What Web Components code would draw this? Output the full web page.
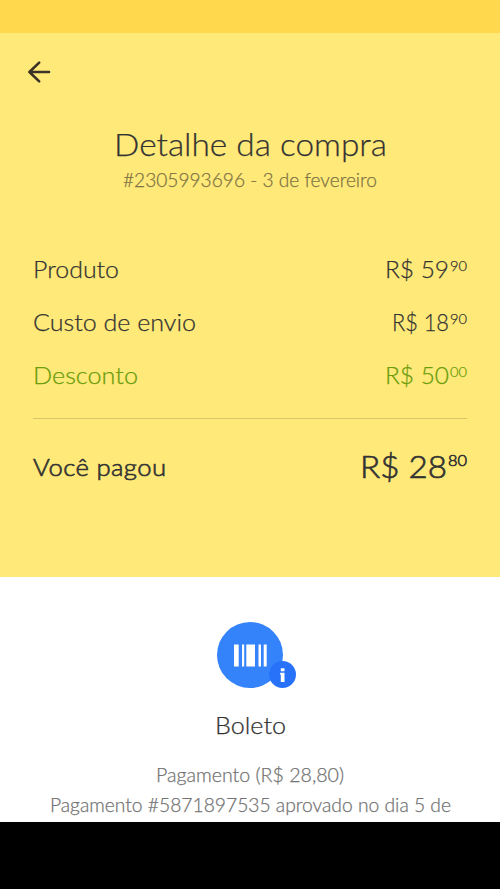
<!DOCTYPE html>
<html lang="pt-BR">
<head>
<meta charset="utf-8">
<title>Detalhe da compra</title>
<style>
html,body{margin:0;height:100%;overflow:hidden;background:#000}
body{font-family:Lato,"Liberation Sans",sans-serif;color:#333}
</style>
</head>
<body>
<purchase-page></purchase-page>
<script>
const define=(name,html,init)=>customElements.define(name,class extends HTMLElement{
  connectedCallback(){
    if(this.shadowRoot)return;
    const t=document.createElement('template');
    t.innerHTML=html;
    this.attachShadow({mode:'open'}).append(t.content.cloneNode(true));
    if(init)init.call(this);
  }
});

/* Text run widened to a given width in pixels: glyphs by up to 7%, the rest by tracking. */
define('text-run',`<style>:host{display:inline-block;white-space:pre;text-align:left;-webkit-text-stroke:var(--stroke,.25px)}
span{display:inline-block;transform-origin:0 50%}</style><span><slot></slot></span>`,function(){
  const span=this.shadowRoot.querySelector('span');
  const n=this.textContent.length, w=this.getBoundingClientRect().width, target=+this.getAttribute('width');
  const k=Math.min(1.07,target/w);
  span.style.letterSpacing=((target/k-w)/(n-1)).toFixed(3)+'px';
  span.style.transform=`scaleX(${k.toFixed(4)})`;
  this.style.width=target+'px';
});

define('status-strip','<style>:host{display:block;height:33px;background:#ffd84d}</style>');

define('nav-bar',`<style>:host{display:flex;align-items:center;height:78px;padding-left:27px}svg{display:block}</style>
<svg width="24" height="24" viewBox="0 0 24 24" fill="none" stroke="#3b3225" stroke-width="2.6" stroke-linecap="round" stroke-linejoin="round"><path d="M12.2 2.6 2.4 12l9.8 9.4M2.4 12H22"/></svg>`);

define('page-heading',`<style>:host{display:block;text-align:center}
h1{margin:14px 0 0;height:38px;font-size:31.5px;line-height:38px;font-weight:300}
p{margin:5px 0 0;height:24px;font-size:19px;line-height:24px;font-weight:300;color:#7d7345}</style>
<h1><text-run width="273">Detalhe da compra</text-run></h1>
<p><text-run width="254">#2305993696 - 3 de fevereiro</text-run></p>`);

define('price-amount',`<style>:host{display:flex;align-items:flex-start;line-height:1}
.c{font-size:var(--cents,14.5px);margin:var(--cents-top,2px) 0 0 var(--cents-gap,1.5px)}</style>
<slot></slot><span class="c"><slot name="cents"></slot></span>`);

define('cost-row',`<style>:host{display:flex;align-items:center;justify-content:space-between;height:53px;font-size:24px;font-weight:300;line-height:1}
:host([tone=discount]){color:#6a9c0c}
:host([total]){height:96px;--stroke:.65px;--cents:15.5px;--cents-top:2px}
:host([total]) .v{font-size:31.5px}
::slotted([slot=cents]){--stroke:.45px}</style>
<slot name="label"></slot><div class="v"><slot></slot></div>`);

define('cost-summary',`<style>:host{display:block;margin-top:50px;padding:0 33px}hr{border:0;height:1px;margin:17px 0 0;background:#d6c76c}</style>
<cost-row><text-run slot="label" width="86">Produto</text-run><price-amount><text-run width="64">R$ 59</text-run><text-run slot="cents" width="17">90</text-run></price-amount></cost-row>
<cost-row><text-run slot="label" width="163">Custo de envio</text-run><price-amount><text-run width="57">R$ 18</text-run><text-run slot="cents" width="17">90</text-run></price-amount></cost-row>
<cost-row tone="discount"><text-run slot="label" width="105">Desconto</text-run><price-amount><text-run width="64">R$ 50</text-run><text-run slot="cents" width="17">00</text-run></price-amount></cost-row>
<hr>
<cost-row total><text-run slot="label" width="133">Você pagou</text-run><price-amount><text-run width="87">R$ 28</text-run><text-run slot="cents" width="19">80</text-run></price-amount></cost-row>`);

define('boleto-icon',`<style>:host{display:block;position:relative;width:66px;height:66px;margin:0 auto}
svg{display:block}.info{position:absolute;left:52px;top:39px}</style>
<svg width="66" height="66" viewBox="0 0 66 66"><circle cx="33" cy="33" r="33" fill="#3483fa"/><path fill="#fff" d="M17 22.5h4.7v22H17zM25 22.5h2.2v22H25zM29.3 22.5h8.7v22h-8.7zM41.5 22.5h2.5v22h-2.5zM46.7 22.5h3v22h-3z"/></svg>
<svg class="info" width="27" height="27" viewBox="0 0 27 27"><circle cx="13.5" cy="13.5" r="13.5" fill="#2872fa"/><path fill="#fff" d="M11.8 7.2h3.7v3h-3.7zM11.2 11.8h4.3v9.1h-3.7v-7.2h-.6z"/></svg>`);

define('payment-panel',`<style>:host{display:block;box-sizing:border-box;height:245px;padding-top:45px;background:#fff;text-align:center;overflow:hidden}
h2{margin:22px 0 0;height:30px;line-height:30px;font-size:24px;font-weight:300}
p{margin:0;height:30px;line-height:30px;font-size:18.8px;font-weight:300;color:#737373}
h2+p{margin-top:19.5px}</style>
<boleto-icon></boleto-icon>
<h2><text-run width="71">Boleto</text-run></h2>
<p><text-run width="188">Pagamento (R$ 28,80)</text-run></p>
<p><text-run width="401">Pagamento #5871897535 aprovado no dia 5 de</text-run></p>`);

define('purchase-page',`<style>:host{display:block;width:500px;height:889px;background:#000}
section{height:577px;background:#ffe978}</style>
<section><status-strip></status-strip><nav-bar></nav-bar><page-heading></page-heading><cost-summary></cost-summary></section>
<payment-panel></payment-panel>`);
</script>
</body>
</html>
